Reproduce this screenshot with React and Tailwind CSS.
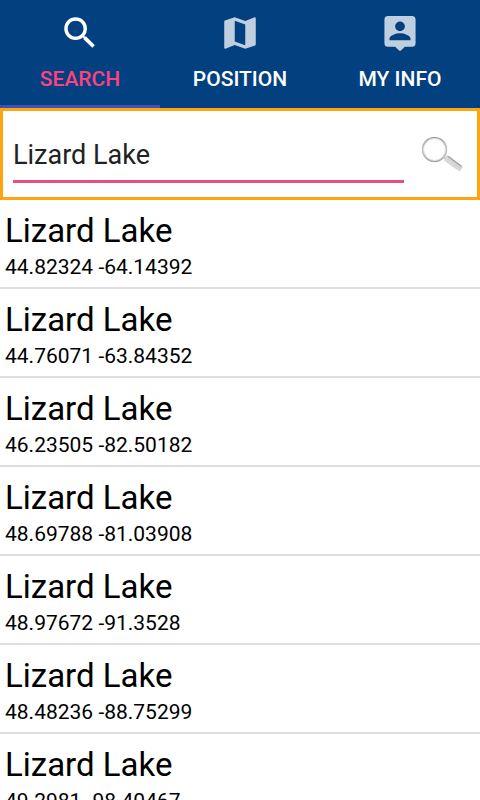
import { useState } from 'react';
import { MdSearch, MdMap } from 'react-icons/md';

const TABS = [
  { id: 'search',   label: 'SEARCH',   Icon: MdSearch },
  { id: 'position', label: 'POSITION', Icon: MdMap },
  { id: 'info',     label: 'MY INFO',  Icon: PersonPinIcon },
];

const RESULTS = [
  { name: 'Lizard Lake', lat: '44.82324', lng: '-64.14392' },
  { name: 'Lizard Lake', lat: '44.76071', lng: '-63.84352' },
  { name: 'Lizard Lake', lat: '46.23505', lng: '-82.50182' },
  { name: 'Lizard Lake', lat: '48.69788', lng: '-81.03908' },
  { name: 'Lizard Lake', lat: '48.97672', lng: '-91.3528' },
  { name: 'Lizard Lake', lat: '48.48236', lng: '-88.75299' },
  { name: 'Lizard Lake', lat: '49.2981',  lng: '-98.40467' },
];

function PersonPinIcon({ size, className }) {
  return (
    <svg viewBox="0 0 24 24" width={size} height={size} fill="currentColor" className={className} aria-hidden="true">
      <path
        fillRule="evenodd"
        d="M19 2.300H5C3.900 2.300 3.100 3.100 3.100 4.100V18c0 1.100.8 1.900 1.900 1.900h4.300l2 2q.7.600 1.400 0l2-2H19c1.100 0 1.900-.8 1.900-1.900V4.100C20.900 3.100 20.100 2.300 19 2.300zM12 5.400a2.800 2.800 0 1 1 0 5.600 2.800 2.800 0 0 1 0-5.600zM18 16.200H6v-.9c0-2 4-3.100 6-3.100s6 1.100 6 3.100z"
      />
    </svg>
  );
}

function GlassIcon() {
  return (
    <svg viewBox="0 0 42 36" className="w-[42px] h-9" aria-hidden="true">
      <defs>
        <linearGradient id="handle" x1="0" y1="1" x2="1" y2="0">
          <stop offset="0" stopColor="#e6e6e6" />
          <stop offset="0.5" stopColor="#d6d6d6" />
          <stop offset="1" stopColor="#b0b0b0" />
        </linearGradient>
        <linearGradient id="rim" x1="0" y1="0" x2="0" y2="1">
          <stop offset="0" stopColor="#9a9a9a" />
          <stop offset="0.5" stopColor="#c4c4c4" />
          <stop offset="1" stopColor="#a2a2a2" />
        </linearGradient>
      </defs>
      <circle cx="13.5" cy="13.5" r="11.6" fill="none" stroke="#e0e0e0" strokeWidth="2.4" />
      <circle cx="13.5" cy="13.5" r="12" fill="none" stroke="url(#rim)" strokeWidth="1.2" />
      <path d="M22.500 22.500l2-1.500" stroke="#c4c4c4" strokeWidth="2" />
      <path d="M26.500 19.500L41 30.200q.9.800.1 1.900l-1.600 2.300q-.9 1.100-2.100.3L23.600 25.300q-1-.8-.3-1.900l1.700-3.400q.6-1.100 1.500-.5z" fill="url(#handle)" />
      <path d="M27 20.200L40.500 30.300" fill="none" stroke="#a0a0a0" strokeWidth="1.300" />
    </svg>
  );
}

export default function App() {
  const [tab,   setTab]   = useState('search');
  const [query, setQuery] = useState('Lizard Lake');

  return (
    <div className="flex flex-col h-screen overflow-hidden bg-white font-['Roboto',sans-serif]">
      {/* Tabs */}
      <nav className="grid grid-cols-3 shrink-0 bg-[#02407f]">
        {TABS.map(({ id, label, Icon }) => (
          <button
            key={id}
            type="button"
            onClick={() => setTab(id)}
            className={`flex flex-col items-center gap-[11px] py-3 border-b-3 text-[21px] leading-7 font-medium ${
              tab === id ? 'border-[#3f51b5] text-[#ff4081]' : 'border-transparent text-white'
            }`}
          >
            <Icon size={42} className={tab === id ? 'text-white' : 'text-[#c0cfdf]'} />
            {label}
          </button>
        ))}
      </nav>

      {/* Search box */}
      <form
        onSubmit={e => e.preventDefault()}
        className="flex items-start shrink-0 gap-[17px] h-[92px] pl-[10px] pr-[14px] pt-6 border-3 border-[#ffa310]"
      >
        <input
          type="text"
          aria-label="Place name"
          value={query}
          onChange={e => setQuery(e.target.value)}
          className="flex-1 min-w-0 h-12 pb-[6px] border-b-3 border-[#ea4c84] text-[27px] text-[#212121] outline-none"
        />
        <button type="submit" aria-label="Search" className="shrink-0 pt-px">
          <GlassIcon />
        </button>
      </form>

      {/* Results */}
      <ul className="flex-1 min-h-0 overflow-y-auto [scrollbar-width:none]">
        {RESULTS.map(r => (
          <li key={r.lat} className="px-[5px] pt-[11px] pb-1 border-b-2 border-[#dedede] text-black">
            <p className="text-[33px] leading-10">{r.name}</p>
            <p className="text-[21px] leading-8">{r.lat} {r.lng}</p>
          </li>
        ))}
      </ul>
    </div>
  );
}
